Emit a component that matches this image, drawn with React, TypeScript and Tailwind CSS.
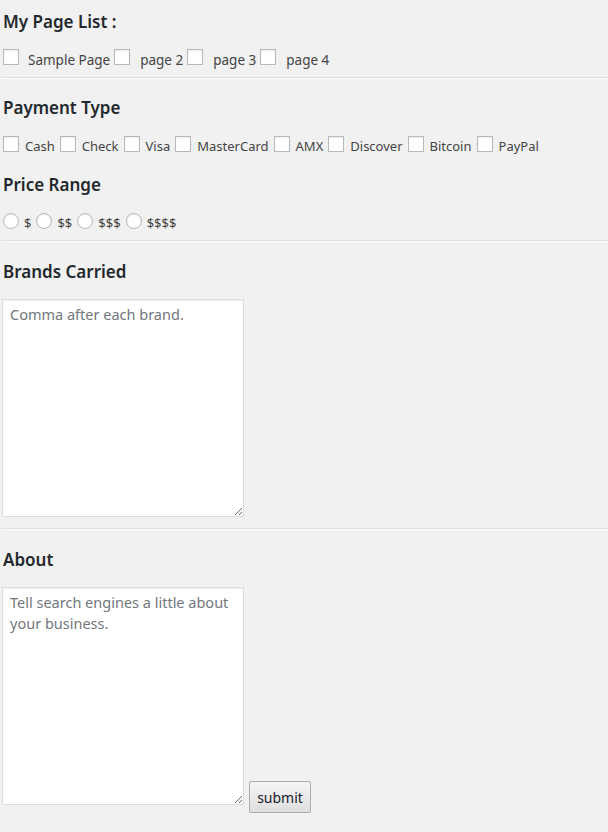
import React from "react";

const font = { fontFamily: '"Noto Sans", "Open Sans", sans-serif' };

function Box() {
  return <span className="inline-block w-[16px] h-[16px] shrink-0 bg-white border border-[#b4b9be] shadow-[inset_0_1px_2px_rgba(0,0,0,0.07)]" />;
}
function Radio() {
  return <span className="inline-block w-[16px] h-[16px] shrink-0 bg-white border border-[#b4b9be] rounded-full shadow-[inset_0_1px_2px_rgba(0,0,0,0.07)]" />;
}
function Hr() {
  return <div className="ml-[2px] h-[2px] border-t border-[#dddddd] border-b border-b-[#fafafa]" />;
}

const h3 = "pl-[3px] text-[17px] leading-[22px] font-semibold text-[#23282d]";

export default function App() {
  const pages = ["Sample Page", "page 2", "page 3", "page 4"];
  const pays = ["Cash", "Check", "Visa", "MasterCard", "AMX", "Discover", "Bitcoin", "PayPal"];
  const prices = ["$", "$$", "$$$", "$$$$"];
  return (
    <div style={font} className="w-[608px] min-h-[832px] bg-[#f1f1f1] text-[#444] text-[13px]">
      <h3 className={h3 + " pt-[11px]"}>My Page List :</h3>
      <div className="mt-[18px] pl-[3px] flex items-center h-[18px]">
        {pages.map((p, i) => (
          <React.Fragment key={p}>
            <span className={i === 0 ? "" : "ml-[4px]"}><Box /></span>
            <span className={i === 0 ? "ml-[9px] text-[13.5px]" : "ml-[10px] text-[13.5px]"}>{p}</span>
          </React.Fragment>
        ))}
      </div>
      <div className="mt-[8px]"><Hr /></div>
      <h3 className={h3 + " mt-[18px]"}>Payment Type</h3>
      <div className="mt-[19px] pl-[3px] flex items-center h-[18px]">
        {pays.map((p, i) => (
          <React.Fragment key={p}>
            <span className={i === 0 ? "" : "ml-[5px]"}><Box /></span>
            <span className="ml-[6px]">{p}</span>
          </React.Fragment>
        ))}
      </div>
      <h3 className={h3 + " mt-[18px]"}>Price Range</h3>
      <div className="mt-[19px] pl-[3px] flex items-center h-[18px]">
        {prices.map((p, i) => (
          <React.Fragment key={p}>
            <span className={i === 0 ? "" : "ml-[5px]"}><Radio /></span>
            <span className="ml-[5px]">{p}</span>
          </React.Fragment>
        ))}
      </div>
      <div className="mt-[7px]"><Hr /></div>
      <h3 className={h3 + " mt-[19px]"}>Brands Carried</h3>
      <div className="mt-[16px] pl-[2px]">
        <textarea
          style={font}
          placeholder="Comma after each brand."
          className="block w-[242px] h-[218px] bg-white border border-[#dddddd] shadow-[inset_0_1px_2px_rgba(0,0,0,0.07)] px-[7px] py-[4px] text-[14.5px] leading-[21px] text-[#32373c] placeholder:text-[#72777c] outline-none"
        />
      </div>
      <div className="mt-[11px]"><Hr /></div>
      <h3 className={h3 + " mt-[19px]"}>About</h3>
      <div className="mt-[16px] pl-[2px] flex items-end">
        <textarea
          style={font}
          placeholder="Tell search engines a little about your business."
          className="block w-[242px] h-[218px] bg-white border border-[#dddddd] shadow-[inset_0_1px_2px_rgba(0,0,0,0.07)] px-[7px] py-[4px] text-[14.5px] leading-[21px] text-[#32373c] placeholder:text-[#72777c] outline-none"
        />
        <button
          style={font}
          className="ml-[5px] mb-[-8px] w-[62px] h-[32px] border border-[#adadad] rounded-[2px] bg-gradient-to-b from-[#f6f6f6] to-[#dedede] text-[14px] text-[#1a1a2e]"
        >
          submit
        </button>
      </div>
    </div>
  );
}
